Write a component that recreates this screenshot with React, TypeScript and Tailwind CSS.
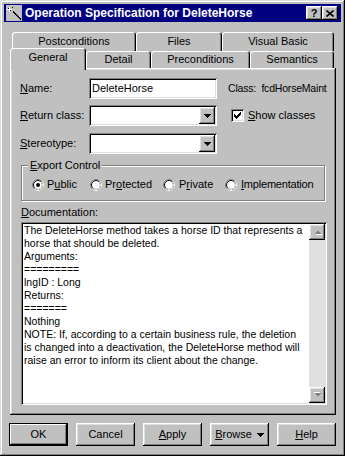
import React from 'react';

const raised =
  'shadow-[inset_-1px_-1px_#000,inset_1px_1px_#fff,inset_-2px_-2px_#808080,inset_2px_2px_#dfdfdf]';
const sunken =
  'shadow-[inset_1px_1px_#808080,inset_-1px_-1px_#fff,inset_2px_2px_#000,inset_-2px_-2px_#dfdfdf]';

const DownArrow = ({ color = '#000' }: { color?: string }) => (
  <svg width="7" height="4" viewBox="0 0 7 4" shapeRendering="crispEdges">
    <rect x="0" y="0" width="7" height="1" fill={color} />
    <rect x="1" y="1" width="5" height="1" fill={color} />
    <rect x="2" y="2" width="3" height="1" fill={color} />
    <rect x="3" y="3" width="1" height="1" fill={color} />
  </svg>
);

// greyed arrow for the disabled scroll bar buttons
const ScrollArrow = ({ up }: { up?: boolean }) => (
  <svg width="9" height="6" viewBox="0 0 9 6" shapeRendering="crispEdges" className={up ? '' : 'rotate-180'}>
    <path d="M1 5h7L4.5 1.5z" fill="#fff" transform="translate(1 1)" />
    <path d="M1 5h7L4.5 1.5z" fill="#808080" />
  </svg>
);

const Radio = ({ checked }: { checked?: boolean }) => (
  <svg width="12" height="12" viewBox="0 0 12 12" className="shrink-0">
    <circle cx="6" cy="6" r="5.5" fill="#fff" stroke="#808080" />
    <path d="M9.89 2.11 A5.5 5.5 0 0 1 2.11 9.89" fill="none" stroke="#fff" />
    <circle cx="6" cy="6" r="4.5" fill="none" stroke="#000" />
    <path d="M9.18 2.82 A4.5 4.5 0 0 1 2.82 9.18" fill="none" stroke="#dfdfdf" />
    {checked && <circle cx="6" cy="6" r="2" fill="#000" />}
  </svg>
);

const Combo = () => (
  <div className={`flex w-[128px] h-[21px] bg-white p-[2px] ${sunken}`}>
    <div className="flex-1" />
    <div className={`w-[16px] h-full bg-[#c0c0c0] flex items-center justify-center ${raised}`}>
      <DownArrow />
    </div>
  </div>
);

const docLines = [
  'The DeleteHorse method takes a horse ID that represents a',
  'horse that should be deleted.',
  'Arguments:',
  '=========',
  'lngID : Long',
  'Returns:',
  '=======',
  'Nothing',
  'NOTE: If, according to a certain business rule, the deletion',
  'is changed into a deactivation, the DeleteHorse method will',
  'raise an error to inform its client about the change.',
];

const Tab = ({ label, w }: { label: string; w: string }) => (
  <div
    className={`${w} h-full flex items-center justify-center bg-[#c0c0c0] rounded-t-[3px] shadow-[inset_1px_1px_#fff,inset_-1px_0_#000,inset_-2px_0_#808080]`}
  >
    {label}
  </div>
);

const BackTab = ({ label, w }: { label: string; w: string }) => (
  <div
    className={`${w} h-full flex justify-center pt-[3px] bg-[#c0c0c0] rounded-t-[3px] shadow-[inset_1px_1px_#fff,inset_-1px_0_#000,inset_-2px_0_#808080]`}
  >
    {label}
  </div>
);

const Button = ({ children, isDefault }: { children: React.ReactNode; isDefault?: boolean }) => (
  <div
    className={`w-[59px] h-[23px] flex items-center justify-center bg-[#c0c0c0] ${
      isDefault
        ? 'border border-black shadow-[inset_-1px_-1px_#000,inset_1px_1px_#fff,inset_-2px_-2px_#808080]'
        : raised
    }`}
  >
    {children}
  </div>
);

export default function App() {
  return (
    <div className="w-[345px] h-[456px] bg-[#c0c0c0] p-[4px] flex flex-col text-[11px] leading-[13px] text-black font-['Liberation_Sans',Arial,sans-serif] shadow-[inset_-1px_-1px_#000,inset_1px_1px_#dfdfdf,inset_-2px_-2px_#808080,inset_2px_2px_#fff]">
      {/* title bar */}
      <div className="h-[18px] bg-[#000080] flex items-center pl-[2px] pr-[3px]">
        <svg width="16" height="16" viewBox="0 0 16 16" shapeRendering="crispEdges">
          <rect x="0" y="0" width="16" height="16" fill="#c0c0c0" />
          <path d="M6 7l1-1 8 8-1 1z" fill="#000" />
          <rect x="3" y="2" width="1" height="5" fill="#fff" />
          <rect x="1" y="4" width="5" height="1" fill="#fff" />
          <rect x="2" y="3" width="1" height="1" fill="#000" />
          <rect x="4" y="5" width="1" height="1" fill="#000" />
          <rect x="6" y="2" width="1" height="1" fill="#000" />
        </svg>
        <div className="flex-1 ml-[3px] text-white font-bold text-[12px] leading-[16px] whitespace-nowrap">
          Operation Specification for DeleteHorse
        </div>
        <div className={`w-[16px] h-[14px] bg-[#c0c0c0] flex items-center justify-center font-bold text-[11px] leading-[11px] ${raised}`}>
          ?
        </div>
        <div className={`w-[16px] h-[14px] bg-[#c0c0c0] flex items-center justify-center ${raised}`}>
          <svg width="8" height="7" viewBox="0 0 8 7">
            <path d="M0.5 0.5L7.5 6.5M7.5 0.5L0.5 6.5" stroke="#000" strokeWidth="1.6" />
          </svg>
        </div>
      </div>

      {/* tab rows */}
      <div className="mt-[10px] flex flex-col">
        <div className="flex h-[19px] pl-[8px]">
          <BackTab label="Postconditions" w="w-[124px]" />
          <BackTab label="Files" w="w-[86px]" />
          <BackTab label="Visual Basic" w="w-[112px]" />
        </div>
        <div className="flex items-end h-[17px] pl-[6px]">
          <div className="w-[76px] h-[22px] mb-[-2px] relative z-10 flex items-center justify-center pb-[3px] bg-[#c0c0c0] rounded-t-[3px] shadow-[inset_1px_1px_#fff,inset_-1px_0_#000,inset_-2px_0_#808080]">
            General
          </div>
          <Tab label="Detail" w="w-[65px]" />
          <Tab label="Preconditions" w="w-[99px]" />
          <Tab label="Semantics" w="w-[84px]" />
        </div>
      </div>

      {/* panel */}
      <div className={`ml-[6px] w-[326px] h-[347px] pl-[10px] pt-[10px] flex flex-col ${raised}`}>
        <div className="flex items-center h-[21px]">
          <div className="w-[69px]">
            <u>N</u>ame:
          </div>
          <div className={`w-[128px] h-[21px] bg-white flex items-center pl-[3px] ${sunken}`}>DeleteHorse</div>
          <div className="ml-[11px] whitespace-nowrap text-[10.5px] tracking-[-0.2px]">Class:&nbsp; fcdHorseMaint</div>
        </div>
        <div className="flex items-center h-[21px] mt-[6px]">
          <div className="w-[69px]">
            <u>R</u>eturn class:
          </div>
          <Combo />
          <div className={`ml-[14px] w-[13px] h-[13px] bg-white flex items-center justify-center ${sunken}`}>
            <svg width="7" height="7" viewBox="0 0 7 7" shapeRendering="crispEdges">
              <path d="M0 2h1v1h1v1h1v-1h1v-1h1v-1h1v-1h1v3h-1v1h-1v1h-1v1h-1v1h-1v-1h-1v-1h-1z" fill="#000" />
            </svg>
          </div>
          <div className="ml-[4px]">
            <u>S</u>how classes
          </div>
        </div>
        <div className="flex items-center h-[21px] mt-[7px]">
          <div className="w-[69px]">
            <u>S</u>tereotype:
          </div>
          <Combo />
        </div>

        {/* export control group */}
        <div className="relative mt-[11px] ml-[1px] w-[304px] h-[36px] border border-[#808080] shadow-[inset_1px_1px_#fff,1px_1px_#fff] flex items-center pl-[10px] pt-[3px]">
          <div className="absolute left-[6px] top-[-7px] px-[2px] bg-[#c0c0c0]">
            <u>E</u>xport Control
          </div>
          <div className="w-[58px] flex items-center gap-[3px]">
            <Radio checked />
            <span>
              P<u>u</u>blic
            </span>
          </div>
          <div className="w-[73px] flex items-center gap-[3px]">
            <Radio />
            <span>
              Pr<u>o</u>tected
            </span>
          </div>
          <div className="w-[62px] flex items-center gap-[4px]">
            <Radio />
            <span>
              P<u>r</u>ivate
            </span>
          </div>
          <div className="flex items-center gap-[4px]">
            <Radio />
            <span className="tracking-[-0.2px]">
              <u>I</u>mplementation
            </span>
          </div>
        </div>

        <div className="mt-[5px] ml-[1px]">
          <u>D</u>ocumentation:
        </div>
        <div className={`mt-[3px] ml-[1px] w-[306px] h-[183px] p-[2px] flex bg-white ${sunken}`}>
          <div className="flex-1 pl-[1px] overflow-hidden text-[10.5px]">
            {docLines.map((l, i) => (
              <div key={i} className="whitespace-pre">
                {l}
              </div>
            ))}
          </div>
          <div className="w-[16px] flex flex-col bg-[#e0e0e0]">
            <div className={`h-[16px] bg-[#c0c0c0] flex items-center justify-center ${raised}`}>
              <ScrollArrow up />
            </div>
            <div className="flex-1" />
            <div className={`h-[16px] bg-[#c0c0c0] flex items-center justify-center ${raised}`}>
              <ScrollArrow />
            </div>
          </div>
        </div>
      </div>

      {/* buttons */}
      <div className="mt-[8px] ml-[5px] flex gap-[8px]">
        <Button isDefault>OK</Button>
        <Button>Cancel</Button>
        <Button>
          <span>
            <u>A</u>pply
          </span>
        </Button>
        <Button>
          <span className="flex items-center gap-[5px]">
            <span>
              <u>B</u>rowse
            </span>
            <DownArrow />
          </span>
        </Button>
        <Button>
          <span>
            <u>H</u>elp
          </span>
        </Button>
      </div>
    </div>
  );
}
